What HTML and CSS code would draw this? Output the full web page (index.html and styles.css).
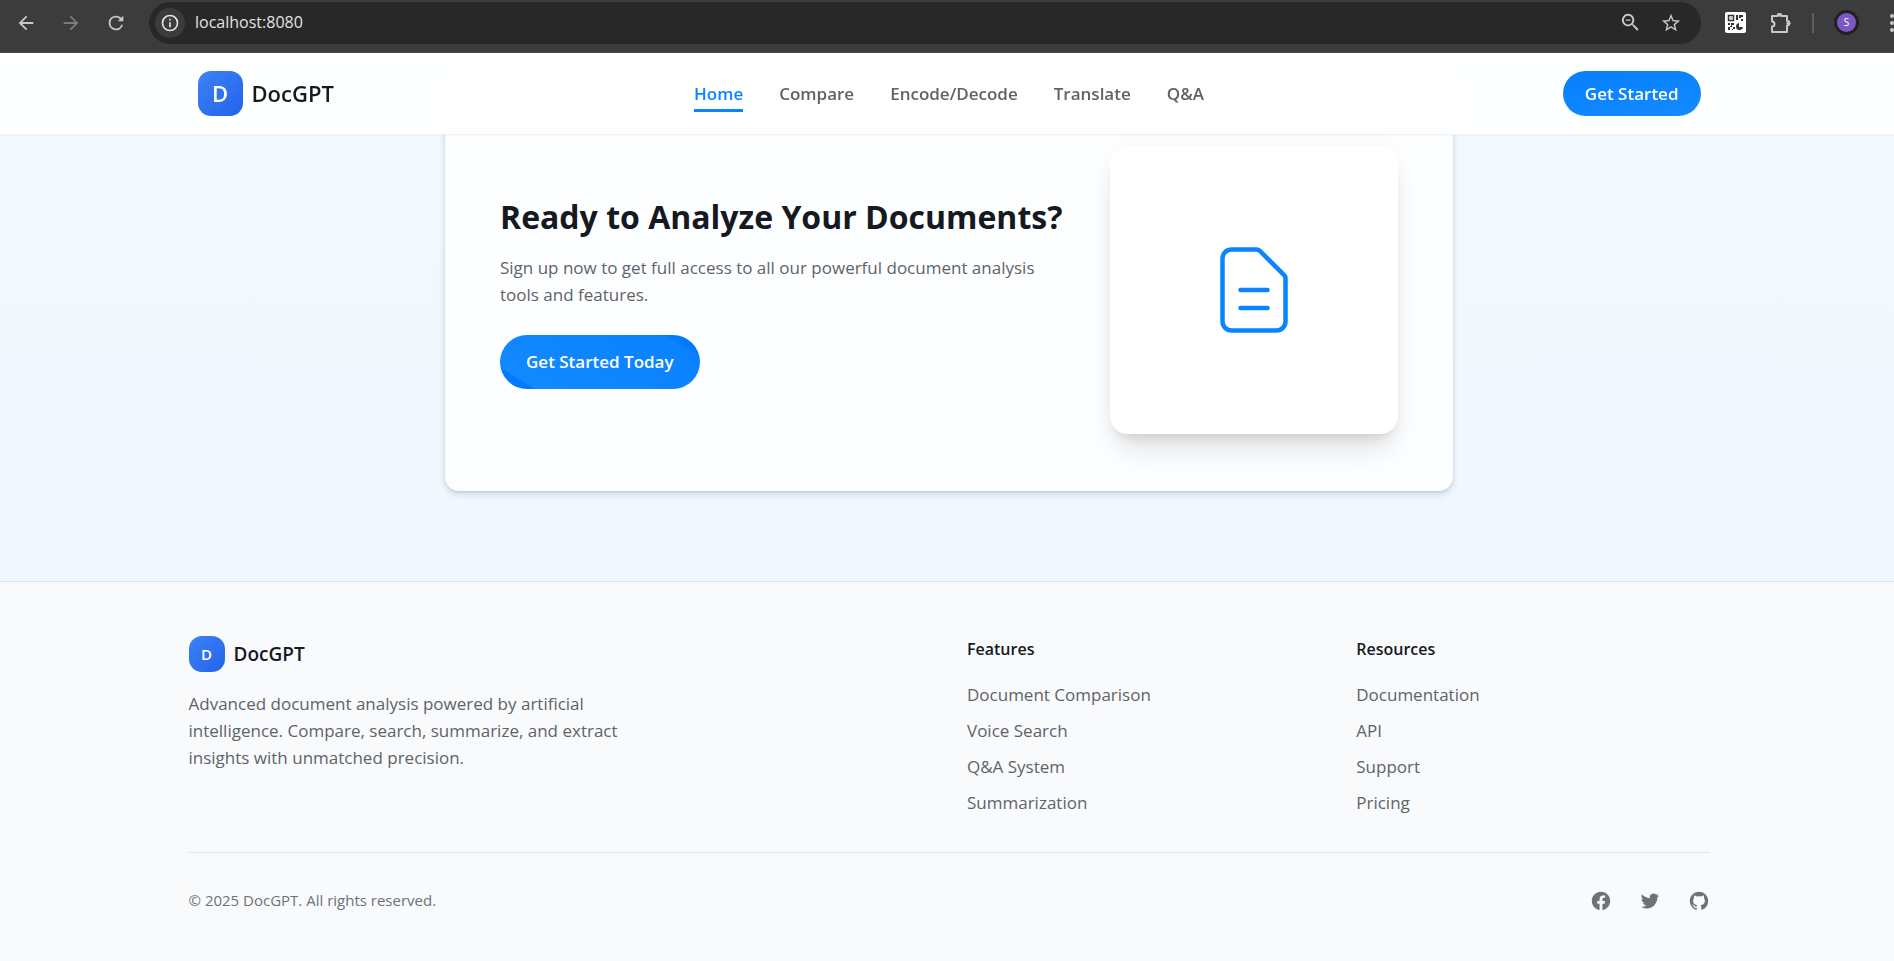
FILE: index.html
```html
<!DOCTYPE html>
<html lang="en">
<head>
<meta charset="utf-8">
<title>DocGPT</title>
<link rel="stylesheet" href="styles.css">
</head>
<body>
<div class="toolbar">
  <div class="history">
    <button class="tool" aria-label="Back"><svg viewBox="0 0 24 24" width="22" height="22"><path d="M20 11H7.83l5.59-5.59L12 4l-8 8 8 8 1.41-1.41L7.83 13H20z"/></svg></button>
    <button class="tool dim" aria-label="Forward"><svg viewBox="0 0 24 24" width="22" height="22"><path d="M4 13h12.17l-5.59 5.59L12 20l8-8-8-8-1.41 1.41L16.17 11H4z"/></svg></button>
    <button class="tool" aria-label="Reload"><svg viewBox="0 0 24 24" width="22" height="22"><path d="M17.65 6.35A7.96 7.96 0 0 0 12 4a8 8 0 1 0 7.73 10h-2.08A6 6 0 1 1 12 6c1.66 0 3.14.69 4.22 1.78L14 10h6V4z"/></svg></button>
  </div>
  <div class="omnibox">
    <button class="site-info" aria-label="Site information"><svg viewBox="0 0 24 24" width="20" height="20"><path d="M11 7h2v2h-2zm0 4h2v6h-2zm1-9a10 10 0 1 0 0 20 10 10 0 0 0 0-20zm0 18a8 8 0 1 1 0-16 8 8 0 0 1 0 16z"/></svg></button>
    <input class="address" aria-label="Address" value="localhost:8080">
    <button class="tool" aria-label="Zoom"><svg viewBox="0 0 24 24" width="23" height="23"><path d="M15.5 14h-.79l-.28-.27A6.5 6.5 0 1 0 13.73 14.43l.27.28v.79l5 4.99L20.49 19zm-6 0a4.5 4.5 0 1 1 0-9 4.5 4.5 0 0 1 0 9zM7 8.800h5v1.500H7z"/></svg></button>
    <button class="tool" aria-label="Bookmark"><svg viewBox="0 0 24 24" width="22" height="22"><path d="m22 9.240-7.190-.62L12 2 9.190 8.630 2 9.240l5.460 4.730L5.820 21 12 17.270 18.180 21l-1.630-7.030zM12 15.400l-3.760 2.270 1-4.280-3.320-2.880 4.380-.38L12 6.100l1.710 4.040 4.380.38-3.320 2.880 1 4.280z"/></svg></button>
  </div>
  <div class="extensions">
    <button class="tool" aria-label="QR code"><svg viewBox="0 0 21 21" width="21" height="21"><rect width="21" height="21" rx="2" fill="#fff"/><g fill="none" stroke="#333" stroke-width="1.500"><rect x="3.500" y="3.500" width="5" height="5"/></g><path fill="#333" d="M5.500 5.500h1v1h-1zM11 3h2v5h-2zM14 3h4v2h-2v1h-2zM16 7h2v2h-2zM3 11h2v2H3zM6 11h3v2H7v2H5v-1h1zM3 15h2v3H3zM8 15h2v2H8zM7 17h1v1H7zM14 11a3.500 3.500 0 1 0 4 4h-4z"/></svg></button>
    <button class="tool" aria-label="Extensions"><svg viewBox="0 0 22 22" width="22" height="22"><path fill="none" stroke="#c7c7c7" stroke-width="2" stroke-linejoin="round" d="M2 4h5.500a2 2 0 0 1 4 0H17v5a2 2 0 0 1 0 4.500V20H2v-5.500a2.500 2.500 0 0 0 0-5z"/><circle cx="9.500" cy="3" r="1.800"/><circle cx="18.500" cy="11.300" r="2"/></svg></button>
    <span class="divider"></span>
    <button class="avatar" aria-label="Profile">S</button>
  </div>
  <button class="tool more" aria-label="Menu"><svg viewBox="0 0 6 20" width="6" height="20"><circle cx="3" cy="3" r="2"/><circle cx="3" cy="10" r="2"/><circle cx="3" cy="17" r="2"/></svg></button>
</div>

<div class="page">
  <header class="header">
    <div class="header-inner">
      <a class="brand" href="#"><span class="mark">D</span><span>DocGPT</span></a>
      <nav class="nav">
        <a class="active" href="#">Home</a>
        <a href="#">Compare</a>
        <a href="#">Encode/Decode</a>
        <a href="#">Translate</a>
        <a href="#">Q&amp;A</a>
      </nav>
      <div class="header-action"><button class="button">Get Started</button></div>
    </div>
  </header>

  <main class="cta">
    <section class="card">
      <div class="copy">
        <h2>Ready to Analyze Your Documents?</h2>
        <p>Sign up now to get full access to all our powerful document analysis tools and features.</p>
        <button class="button large">Get Started Today</button>
      </div>
      <div class="tile">
        <svg viewBox="0 0 24 24" width="108" height="108" fill="none" stroke="#0a84ff" stroke-linecap="round" stroke-linejoin="round"><path d="M9 12h6m-6 4h6m2 5H7a2 2 0 0 1-2-2V5a2 2 0 0 1 2-2h5.586a1 1 0 0 1 .707.293l5.414 5.414a1 1 0 0 1 .293.707V19a2 2 0 0 1-2 2z"/></svg>
      </div>
    </section>
  </main>

  <footer class="footer">
    <div class="footer-inner">
      <div class="columns">
        <div class="about">
          <a class="brand small" href="#"><span class="mark">D</span><span>DocGPT</span></a>
          <p>Advanced document analysis powered by artificial intelligence. Compare, search, summarize, and extract insights with unmatched precision.</p>
        </div>
        <div>
          <h3>Features</h3>
          <ul>
            <li><a href="#">Document Comparison</a></li>
            <li><a href="#">Voice Search</a></li>
            <li><a href="#">Q&amp;A System</a></li>
            <li><a href="#">Summarization</a></li>
          </ul>
        </div>
        <div>
          <h3>Resources</h3>
          <ul>
            <li><a href="#">Documentation</a></li>
            <li><a href="#">API</a></li>
            <li><a href="#">Support</a></li>
            <li><a href="#">Pricing</a></li>
          </ul>
        </div>
      </div>
      <div class="bottom">
        <p>© 2025 DocGPT. All rights reserved.</p>
        <div class="social">
          <a href="#" aria-label="Facebook"><svg viewBox="0 0 24 24" width="22" height="22"><path d="M22 12c0-5.523-4.477-10-10-10S2 6.477 2 12c0 4.991 3.657 9.128 8.438 9.878v-6.987h-2.540V12h2.540V9.797c0-2.506 1.492-3.890 3.777-3.890 1.094 0 2.238.195 2.238.195v2.460h-1.260c-1.243 0-1.630.771-1.630 1.562V12h2.773l-.443 2.890h-2.330v6.988C18.343 21.128 22 16.991 22 12z"/></svg></a>
          <a href="#" aria-label="Twitter"><svg viewBox="0 0 24 24" width="22" height="22"><path d="M8.290 20.251c7.547 0 11.675-6.253 11.675-11.675 0-.178 0-.355-.012-.530A8.348 8.348 0 0 0 22 5.920a8.190 8.190 0 0 1-2.357.646 4.118 4.118 0 0 0 1.804-2.270 8.224 8.224 0 0 1-2.605.996 4.107 4.107 0 0 0-6.993 3.743 11.650 11.650 0 0 1-8.457-4.287 4.106 4.106 0 0 0 1.270 5.477A4.072 4.072 0 0 1 2.800 9.713v.052a4.105 4.105 0 0 0 3.292 4.022 4.095 4.095 0 0 1-1.853.070 4.108 4.108 0 0 0 3.834 2.850A8.233 8.233 0 0 1 2 18.407a11.616 11.616 0 0 0 6.290 1.840"/></svg></a>
          <a href="#" aria-label="GitHub"><svg viewBox="0 0 24 24" width="22" height="22"><path d="M12 2C6.477 2 2 6.484 2 12.017c0 4.425 2.865 8.180 6.839 9.504.500.092.682-.217.682-.483 0-.237-.008-.868-.013-1.703-2.782.605-3.369-1.343-3.369-1.343-.454-1.158-1.110-1.466-1.110-1.466-.908-.620.069-.608.069-.608 1.003.070 1.531 1.032 1.531 1.032.892 1.530 2.341 1.088 2.910.832.092-.647.350-1.088.636-1.338-2.220-.253-4.555-1.113-4.555-4.951 0-1.093.390-1.988 1.029-2.688-.103-.253-.446-1.272.098-2.650 0 0 .840-.270 2.750 1.026A9.564 9.564 0 0 1 12 6.844c.850.004 1.705.115 2.504.337 1.909-1.296 2.747-1.027 2.747-1.027.546 1.379.202 2.398.100 2.651.640.700 1.028 1.595 1.028 2.688 0 3.848-2.339 4.695-4.566 4.943.359.309.678.920.678 1.855 0 1.338-.012 2.419-.012 2.747 0 .268.180.580.688.482A10.019 10.019 0 0 0 22 12.017C22 6.484 17.522 2 12 2z"/></svg></a>
        </div>
      </div>
    </div>
  </footer>
</div>
</body>
</html>
```

FILE: styles.css
```css
* { box-sizing: border-box; }
body {
  margin: 0;
  min-height: 100vh;
  display: flex;
  flex-direction: column;
  font-family: "Segoe UI", "Open Sans", "Noto Sans", sans-serif;
  font-size: 17px;
  line-height: 27px;
  color: #16191f;
  background: #f8fafc;
  overflow-x: hidden;
}
h2, h3, p, ul { margin: 0; padding: 0; }
ul { list-style: none; }
a { color: inherit; text-decoration: none; }
button { border: 0; padding: 0; font: inherit; cursor: pointer; }
svg { display: block; }

/* Browser toolbar */
.toolbar {
  display: flex;
  align-items: center;
  height: 53px;
  padding: 0 0 7px 15px;
  background: #3c3c3c;
  border-bottom: 1px solid #4a4a4a;
  overflow: hidden;
}
.history { display: flex; gap: 23px; margin-right: 22px; }
.tool { background: none; fill: #c7c7c7; }
.dim { fill: #7c7c7c; }
.omnibox {
  flex: 1;
  display: flex;
  align-items: center;
  gap: 18px;
  height: 42px;
  padding: 0 19px 0 6px;
  border-radius: 21px;
  background: #282828;
}
.site-info {
  display: grid;
  place-items: center;
  width: 30px;
  height: 30px;
  margin-right: -8px;
  border-radius: 50%;
  background: #3c3c3c;
  fill: #e3e3e3;
}
.address {
  flex: 1;
  min-width: 0;
  border: 0;
  padding: 0;
  outline: 0;
  background: none;
  color: #e3e3e3;
  font: inherit;
  font-size: 16px;
}
.extensions { display: flex; align-items: center; gap: 24px; padding: 0 30px 0 24px; }
.divider { width: 2px; height: 20px; margin: 0 -4px; background: #5e5e5e; }
.avatar {
  width: 25px;
  height: 25px;
  border: 3px solid #202124;
  border-radius: 50%;
  background: #7e57c2;
  color: #fff;
  font-size: 10px;
  line-height: 19px;
}
.more { flex: none; margin-right: -1px; }

/* Page */
.page { position: relative; flex: 1; display: flex; flex-direction: column; }
.header {
  position: absolute;
  top: 0;
  left: 0;
  right: 0;
  z-index: 1;
  padding: 0 24px 0 28px;
  background: rgba(255, 255, 255, 0.92);
  backdrop-filter: blur(12px);
  border-bottom: 1px solid #eef2f6;
  box-shadow: 0 1px 2px rgba(0, 0, 0, 0.04);
}
.header-inner {
  display: grid;
  grid-template-columns: 1fr auto 1fr;
  align-items: center;
  max-width: 1503px;
  margin: 0 auto;
  padding: 18px 0;
}
.brand {
  display: flex;
  align-items: center;
  gap: 9px;
  font-size: 22px;
  font-weight: 600;
}
.mark {
  display: grid;
  place-items: center;
  width: 45px;
  height: 45px;
  border-radius: 13px;
  background: linear-gradient(135deg, #3b82f6, #2563eb);
  color: #fff;
}
.small { font-size: 19px; }
.small .mark { width: 36px; height: 36px; font-size: 15px; }
.nav { display: flex; gap: 36px; font-weight: 600; color: #5f6368; }
.nav a { padding: 4px 0 2px; border-bottom: 3px solid transparent; }
.nav .active { color: #0a84ff; border-color: #0a84ff; }
.header-action { display: flex; justify-content: flex-end; }
.button {
  padding: 9px 22px;
  border-radius: 27px;
  background: linear-gradient(170deg, #0580ff, #158aff);
  color: #fff;
  font-weight: 600;
}
.large {
  padding: 13px 26px;
  line-height: 28px;
  background: linear-gradient(212deg, #007bff 12%, #0a82ff 12%, #1389ff 88%, #007bff 88%);
}

.cta {
  padding: 36px 24px 90px 28px;
  background: linear-gradient(#f2faff, #f0f7ff);
}
.card {
  display: flex;
  align-items: center;
  justify-content: space-between;
  gap: 40px;
  max-width: 1008px;
  margin: 0 auto;
  padding: 57px 55px;
  border-radius: 14px;
  background: #fdfeff;
  box-shadow: 0 4px 7px rgba(20, 30, 50, 0.12), 0 1px 3px rgba(20, 30, 50, 0.12);
}
.copy { max-width: 566px; }
.copy h2 { font-size: 32px; line-height: 51px; font-weight: 700; }
.copy p { max-width: 550px; margin: 12px 0 27px; color: #5f6368; }
.tile {
  flex: none;
  display: grid;
  place-items: center;
  width: 288px;
  height: 288px;
  border-radius: 18px;
  background: #fff;
  box-shadow: 0 22px 28px -6px rgba(0, 0, 0, 0.1), 0 9px 12px -6px rgba(0, 0, 0, 0.1), 0 0 24px rgba(0, 0, 0, 0.03);
}

.footer { flex: 1; padding: 0 24px 0 28px; border-top: 1px solid #dde3ec; background: #f8fafc; color: #5f6368; }
.footer-inner { max-width: 1521px; margin: 0 auto; padding: 54px 0; }
.columns { display: grid; grid-template-columns: repeat(4, 1fr); gap: 36px; padding-bottom: 36px; }
.about { grid-column: span 2; }
.about .brand { color: #16191f; }
.about p { max-width: 440px; margin-top: 18px; }
.columns h3 { margin-bottom: 18px; font-size: 16px; line-height: 27px; font-weight: 600; color: #16191f; }
.columns ul { display: grid; gap: 9px; }
.bottom {
  display: flex;
  align-items: center;
  justify-content: space-between;
  padding-top: 34px;
  border-top: 1px solid #dee3ea;
  color: #6e7278;
  font-size: 15px;
}
.social { display: flex; gap: 27px; fill: #6e7278; }
```
